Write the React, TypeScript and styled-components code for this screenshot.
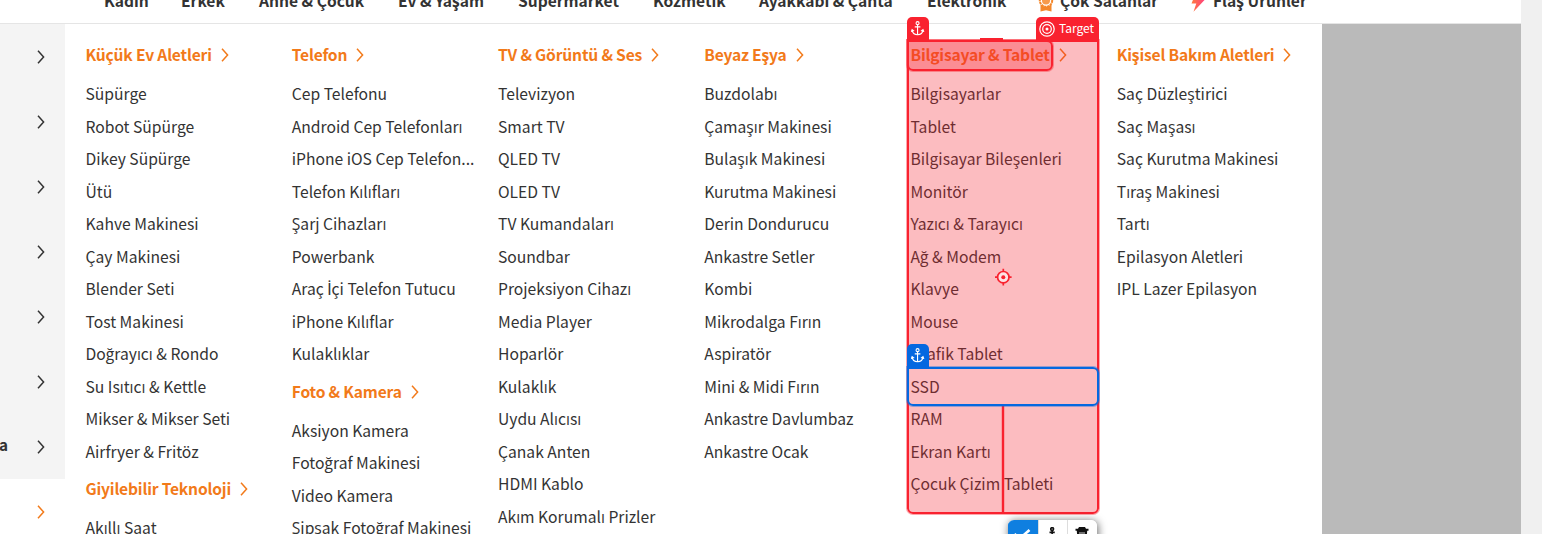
import React from "react";
import styled, { createGlobalStyle } from "styled-components";

const Global = createGlobalStyle`
  body { margin: 0; background: #f0f0f0; overflow: hidden; }
  * { box-sizing: border-box; }
`;

const FONT = `"Noto Sans CJK JP", "Open Sans", sans-serif`;
const RED = "#f9222f";
const BLUE = "#0568e0";

const Page = styled.div`
  position: relative;
  width: 1521px;
  height: 534px;
  overflow: hidden;
  background: #fff;
  font-family: ${FONT};
  color: #333;
`;

const NavBar = styled.nav`
  display: flex;
  height: 24px;
  padding-left: 104px;
  border-bottom: 1px solid #e5e5e5;
`;

const NavItem = styled.a<{ $w: number }>`
  flex: none;
  display: flex;
  width: ${(p) => p.$w}px;
  margin-top: -12px;
  height: 24px;
  line-height: 24px;
  font-size: 15.6px;
  font-weight: 700;
  white-space: nowrap;
`;

const NavIcon = styled.svg`
  flex: none;
  align-self: flex-end;
  width: 18px;
  height: 17px;
  margin: 0 5px 0 -23px;
`;

const Body = styled.div`
  display: flex;
  height: 510px;
`;

const Sidebar = styled.aside`
  width: 65px;
  flex: none;
`;

const SideRow = styled.div<{ $active?: boolean }>`
  display: flex;
  align-items: center;
  justify-content: space-between;
  height: 65px;
  padding: 0 20px 0 0;
  font-size: 15.3px;
  font-weight: 700;
  background: ${(p) => (p.$active ? "#fff" : "#f4f4f4")};
  color: ${(p) => (p.$active ? "#f27a1a" : "#333")};
`;

const SideLabel = styled.span`
  margin: -5px 0 0 -1px;
`;

const Mega = styled.main`
  display: flex;
  width: 1257px;
  flex: none;
  padding: 9px 0 0 20.5px;
`;

const Column = styled.section`
  width: 206.25px;
  flex: none;
`;

const Heading = styled.h3`
  display: flex;
  align-items: center;
  gap: 9px;
  height: 44px;
  margin: 0;
  font-size: 15.6px;
  letter-spacing: -0.18px;
  font-weight: 700;
  color: #f27a1a;
  white-space: nowrap;
`;

const HeadingText = styled.span`
  line-height: 42px;
  margin-bottom: 2px;
`;

const Item = styled.a`
  display: block;
  width: 185px;
  height: 32.5px;
  line-height: 33.5px;
  font-size: 15.66px;
  white-space: nowrap;
`;

const DottedI = styled.span`
  font-family: Roboto, sans-serif;
  font-size: 16px;
  line-height: 1;
`;

const Backdrop = styled.div`
  flex: 1;
  background: #bababa;
`;

const Chevron = () => (
  <svg width="8" height="14" viewBox="0 0 8 14" fill="none" stroke="currentColor" strokeWidth="1.5">
    <path d="M1 0.800 L6.600 7 L1 13.200" />
  </svg>
);

const Outline = styled.div<{ $y: number; $w: number; $h: number; $c: string; $fill?: string }>`
  position: absolute;
  left: 907px;
  top: ${(p) => p.$y}px;
  width: ${(p) => p.$w}px;
  height: ${(p) => p.$h}px;
  border: 2px solid ${(p) => p.$c};
  border-radius: 0 6px 6px 6px;
  background: ${(p) => p.$fill ?? "transparent"};
  box-shadow: 0 0 0 1px ${(p) => p.$c}66;
`;
const TargetOutline = styled(Outline)`
  border-radius: 0 0 6px 6px;
`;
const Tag = styled.div<{ $x: number; $y: number; $w: number; $c: string }>`
  position: absolute;
  left: ${(p) => p.$x}px;
  top: ${(p) => p.$y}px;
  width: ${(p) => p.$w}px;
  height: 23px;
  display: flex;
  align-items: center;
  justify-content: center;
  gap: 4px;
  border-radius: 5px 5px 0 0;
  background: ${(p) => p.$c};
  color: #fff;
`;
const TagText = styled.span`
  font-size: 12px;
  line-height: 20px;
  margin: 0 2px 2px 0;
`;
const Handle = styled.div`
  position: absolute;
  left: 980px;
  top: 38px;
  width: 23px;
  height: 2px;
  background: ${RED};
`;
const Connector = styled.div`
  position: absolute;
  left: 1002px;
  top: 406px;
  width: 2px;
  height: 107px;
  background: ${RED};
  box-shadow: 0 0 0 0.5px ${RED}66;
`;
const Crosshair = styled.svg`
  position: absolute;
  left: 994px;
  top: 268px;
`;
const Toolbar = styled.div`
  position: absolute;
  left: 1008px;
  top: 520px;
  width: 89px;
  height: 30px;
  display: flex;
  overflow: hidden;
  border-radius: 6px;
  background: #fff;
  box-shadow: 1px 1px 8px rgba(0, 0, 0, 0.6);
`;
const Tool = styled.button<{ $on?: boolean }>`
  flex: 1;
  display: flex;
  justify-content: center;
  align-items: flex-start;
  padding: 7px 2px 0 0;
  border: 0;
  border-left: 1px solid ${(p) => (p.$on ? "#0f7fe0" : "#ddd")};
  background: ${(p) => (p.$on ? "#0f7fe0" : "#fff")};
  color: ${(p) => (p.$on ? "#fff" : "#111")};
`;

const AnchorIcon = ({ size = 15, weight = 1.2 }: { size?: number; weight?: number }) => (
  <svg width={(size * 14) / 16} height={size} viewBox="0 0 14 16" fill="none" stroke="currentColor" strokeWidth={weight}>
    <circle cx="7" cy="2.3" r="1.6" />
    <path d="M7 4v11M4 6.200h6M1.200 9.500c.3 3.500 2.800 5.200 5.800 5.200s5.500-1.700 5.800-5.200M.3 11.600L1.200 9.300l2.200 1.500M13.700 11.600L12.800 9.300l-2.200 1.500" />
  </svg>
);

const TargetIcon = () => (
  <svg width="16" height="16" viewBox="0 0 16 16" fill="none" stroke="currentColor" strokeWidth="1.200">
    <circle cx="8" cy="8" r="7.200" />
    <circle cx="8" cy="8" r="4.300" />
    <circle cx="8" cy="8" r="1.500" fill="currentColor" stroke="none" />
  </svg>
);

type Group = { title: string; items: string[] };
const columns: Group[][] = [
  [
    { title: "Küçük Ev Aletleri", items: ["Süpürge", "Robot Süpürge", "Dikey Süpürge", "Ütü", "Kahve Makinesi", "Çay Makinesi", "Blender Seti", "Tost Makinesi", "Doğrayıcı & Rondo", "Su Isıtıcı & Kettle", "Mikser & Mikser Seti", "Airfryer & Fritöz"] },
    { title: "Giyilebilir Teknoloji", items: ["Akıllı Saat"] },
  ],
  [
    { title: "Telefon", items: ["Cep Telefonu", "Android Cep Telefonları", "iPhone iOS Cep Telefon...", "Telefon Kılıfları", "Şarj Cihazları", "Powerbank", "Araç İçi Telefon Tutucu", "iPhone Kılıflar", "Kulaklıklar"] },
    { title: "Foto & Kamera", items: ["Aksiyon Kamera", "Fotoğraf Makinesi", "Video Kamera", "Şipşak Fotoğraf Makinesi"] },
  ],
  [{ title: "TV & Görüntü & Ses", items: ["Televizyon", "Smart TV", "QLED TV", "OLED TV", "TV Kumandaları", "Soundbar", "Projeksiyon Cihazı", "Media Player", "Hoparlör", "Kulaklık", "Uydu Alıcısı", "Çanak Anten", "HDMI Kablo", "Akım Korumalı Prizler"] }],
  [{ title: "Beyaz Eşya", items: ["Buzdolabı", "Çamaşır Makinesi", "Bulaşık Makinesi", "Kurutma Makinesi", "Derin Dondurucu", "Ankastre Setler", "Kombi", "Mikrodalga Fırın", "Aspiratör", "Mini & Midi Fırın", "Ankastre Davlumbaz", "Ankastre Ocak"] }],
  [{ title: "Bilgisayar & Tablet", items: ["Bilgisayarlar", "Tablet", "Bilgisayar Bileşenleri", "Monitör", "Yazıcı & Tarayıcı", "Ağ & Modem", "Klavye", "Mouse", "Grafik Tablet", "SSD", "RAM", "Ekran Kartı", "Çocuk Çizim Tableti"] }],
  [{ title: "Kişisel Bakım Aletleri", items: ["Saç Düzleştirici", "Saç Maşası", "Saç Kurutma Makinesi", "Tıraş Makinesi", "Tartı", "Epilasyon Aletleri", "IPL Lazer Epilasyon"] }],
];

// The CJK face has no precomposed dotted capital I, so it takes another family.
const label = (text: string) =>
  text.split(/(İ)/).map((part, i) => (part === "İ" ? <DottedI key={i}>İ</DottedI> : part));

export default function App() {
  return (
    <>
      <Global />
      <Page>
        <NavBar>
          <NavItem $w={77}>Kadın</NavItem>
          <NavItem $w={78}>Erkek</NavItem>
          <NavItem $w={139}>Anne &amp; Çocuk</NavItem>
          <NavItem $w={120}>Ev &amp; Yaşam</NavItem>
          <NavItem $w={135}>Süpermarket</NavItem>
          <NavItem $w={106}>Kozmetik</NavItem>
          <NavItem $w={168}>Ayakkabı &amp; Çanta</NavItem>
          <NavItem $w={133}>Elektronik</NavItem>
          <NavItem $w={153}>
            <NavIcon viewBox="0 0 18 17">
              <path d="M3.500 10h11v6.500l-5.500-1.300l-5.500 1.300z" fill="#f4872b" />
              <circle cx="9" cy="5.500" r="6.200" fill="#fff" stroke="#f4872b" strokeWidth="2" strokeDasharray="2.400 .6" />
              <circle cx="9" cy="5.500" r="4" fill="#f79a4b" />
            </NavIcon>
            Çok Satanlar
          </NavItem>
          <NavItem $w={100}>
            <NavIcon viewBox="0 0 18 17">
              <defs>
                <linearGradient id="bolt" x1="0" x2="1">
                  <stop offset="0" stopColor="#ff7a3c" />
                  <stop offset="1" stopColor="#ff3f7f" />
                </linearGradient>
              </defs>
              <path d="M5 0h8l-2 4.500h4L3.500 16.800L6.300 8.500H1.500z" fill="url(#bolt)" />
            </NavIcon>
            Flaş Ürünler
          </NavItem>
        </NavBar>
        <Body>
          <Sidebar>
            {["", "", "", "", "", "", "a"].map((t, i) => (
              <SideRow key={i}><SideLabel>{t}</SideLabel><Chevron /></SideRow>
            ))}
            <SideRow $active><SideLabel /><Chevron /></SideRow>
          </Sidebar>
          <Mega>
            {columns.map((groups, i) => (
              <Column key={i}>
                {groups.map((g) => (
                  <React.Fragment key={g.title}>
                    <Heading><HeadingText>{g.title}</HeadingText><Chevron /></Heading>
                    {g.items.map((t) => <Item key={t}>{label(t)}</Item>)}
                  </React.Fragment>
                ))}
              </Column>
            ))}
          </Mega>
          <Backdrop />
        </Body>
        <TargetOutline $y={40} $w={192} $h={474} $c={RED} $fill="rgba(246, 34, 45, 0.3)" />
        <Outline $y={40} $w={146} $h={31} $c={RED} $fill="rgba(249, 34, 47, 0.3)" />
        <Connector />
        <Handle />
        <Outline $y={367} $w={192} $h={39} $c={BLUE} />
        <Tag $x={907} $y={17} $w={22} $c={RED}><AnchorIcon /></Tag>
        <Tag $x={1036} $y={17} $w={63} $c={RED}><TargetIcon /><TagText>Target</TagText></Tag>
        <Tag $x={907} $y={344} $w={22} $c={BLUE}><AnchorIcon /></Tag>
        <Crosshair width="18" height="18" viewBox="0 0 18 18" fill="none" stroke={RED} strokeWidth="1.700">
          <circle cx="9.300" cy="9.200" r="5.700" fill="#fde3e5" />
          <path d="M9.300 .8v3M9.300 14.500v3M1 9.200h3M14.600 9.200h3" />
          <circle cx="9.300" cy="9.200" r="2" fill={RED} stroke="none" />
        </Crosshair>
        <Toolbar>
          <Tool $on>
            <svg width="18" height="14" viewBox="0 0 18 14" fill="none" stroke="currentColor" strokeWidth="2.600">
              <path d="M1.500 6.800l5 5L16.500 3" />
            </svg>
          </Tool>
          <Tool><AnchorIcon size={14} weight={1.9} /></Tool>
          <Tool>
            <svg width="14" height="15" viewBox="0 0 14 15" fill="currentColor">
              <path d="M4 0h6l1 1.800h2.500v2H.5v-2H3zM1.800 3.500h10.400L11.500 15h-9z" />
              <path d="M5 5v8M7 5v8M9 5v8" stroke="#fff" strokeWidth=".8" />
            </svg>
          </Tool>
        </Toolbar>
      </Page>
    </>
  );
}
